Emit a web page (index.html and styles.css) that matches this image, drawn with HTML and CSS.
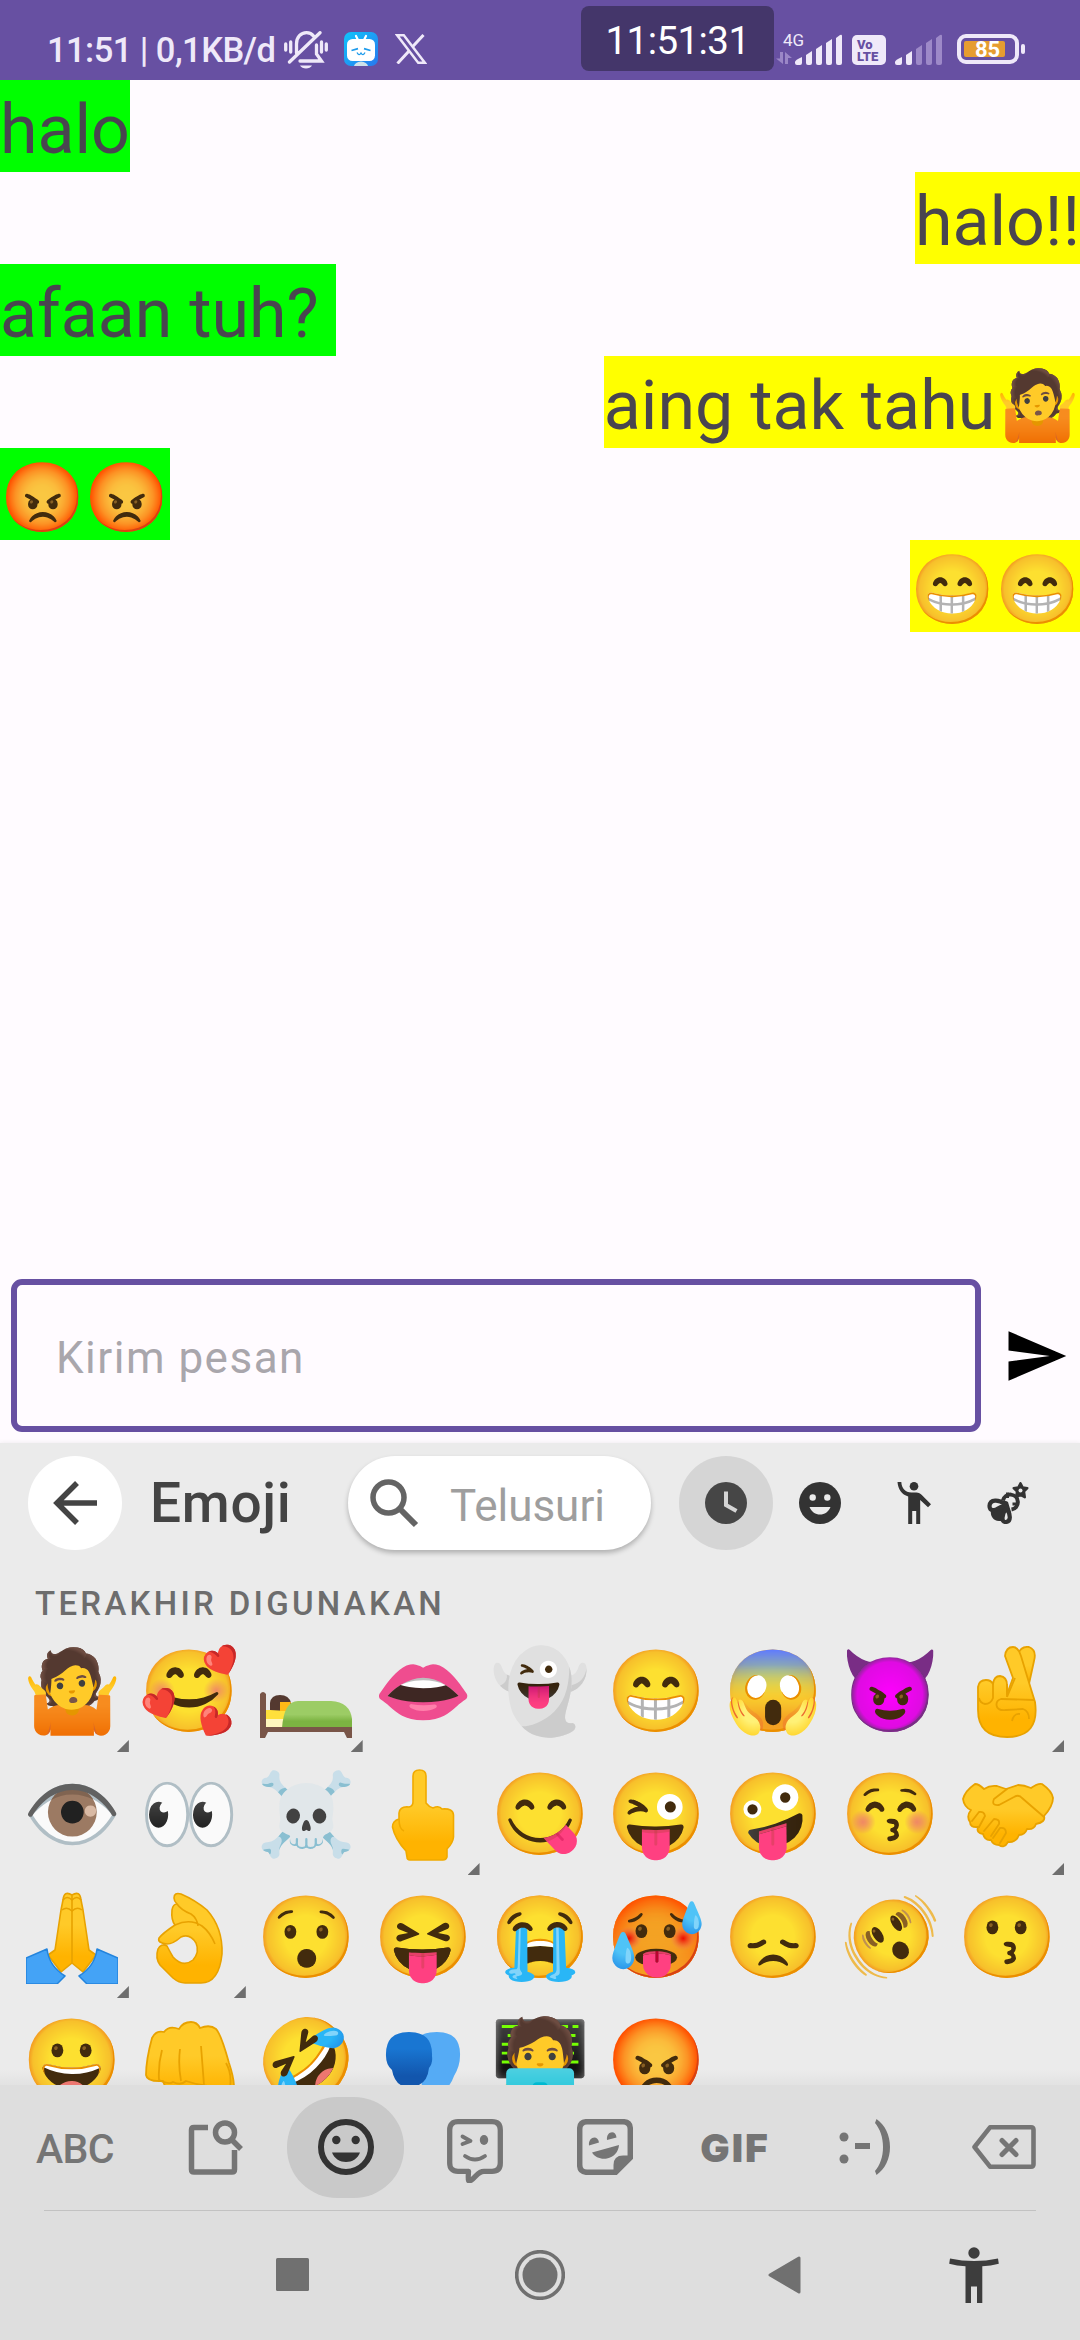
FILE: index.html
```html
<!DOCTYPE html>
<html lang="id">
<head>
<meta charset="utf-8">
<title>Chat</title>
<link rel="stylesheet" href="styles.css">
</head>
<body>
<div class="phone">
  <header class="status">
    <div class="status-left">
      <span class="status-time">11:51 | 0,1KB/d</span>
      <svg class="ic-bell" viewBox="0 0 44 38" width="44" height="38" fill="none" stroke="#efe9f9" stroke-width="3.300" stroke-linecap="round">
        <path d="M12.500 22V13C12.500 6 17 1.700 22.500 1.700c3 0 5.500 1.200 7 3.200M32.500 14v9l5 7H16M36 1.700L5.500 31M1.700 13v6M6.700 11v10M37.500 11v10M42.300 13v6"/>
        <path d="M16 34.500h12c-2 4-10 4-12 0z" fill="#efe9f9" stroke="none"/>
      </svg>
      <svg class="ic-tv" viewBox="0 0 34 34" width="34" height="34">
        <defs><linearGradient id="tv" x1="0" y1="0" x2="1" y2="1"><stop offset="0" stop-color="#10c4fb"/><stop offset="1" stop-color="#2878ee"/></linearGradient></defs>
        <rect width="34" height="34" rx="7" fill="url(#tv)"/>
        <path d="M12 4l2 4M22 4l-2 4" stroke="#fff" stroke-width="2.200" stroke-linecap="round"/>
        <rect x="3" y="7" width="28" height="22" rx="5.500" fill="#fff"/>
        <path d="M10 34q1-4 7-4.500q6 .5 7 4.500z" fill="#cfe2ea"/>
        <path d="M7.500 18.500l6.500-1.800M26.500 18.500L20 16.700" stroke="#1d9bec" stroke-width="1.800"/>
        <path d="M13 20.500q2 4 4 .5q2 3.500 4-.5" stroke="#1d9bec" stroke-width="1.300" fill="none"/>
      </svg>
      <svg class="ic-x" viewBox="0 0 32 30" width="32" height="30" fill="none" stroke="#efe9f9">
        <path d="M2.200 1.300h6.600L29.800 28.700h-6.600z" stroke-width="2.400"/>
        <path d="M28.500 1L17.300 13M14 17L2.500 29.500" stroke-width="3"/>
      </svg>
    </div>
    <div class="clock">11:51:31</div>
    <div class="status-right">
      <div class="net">
        <span class="net-4g">4G</span>
        <svg class="ic-updown" viewBox="0 0 16 12" width="16" height="12" fill="#9b87c7"><path d="M4 0h3v12L0 6.500h4zM9 12h3V6h4L9 0z"/></svg>
      </div>
      <svg class="ic-sig" viewBox="0 0 48 31" width="48" height="31" fill="#efe9f9"><path d="M0 28q0-2 7-5v6q0 2-2 2H2q-2 0-2-2zM11 21l6-4v12q0 2-2 2h-2q-2 0-2-2zM21 15l6-4v18q0 2-2 2h-2q-2 0-2-2zM31 9l6-4v24q0 2-2 2h-2q-2 0-2-2zM41 4l4-3q2-1 2 1v27q0 2-2 2h-2q-2 0-2-2z"/></svg>
      <div class="volte"><span>Vo</span><span>LTE</span></div>
      <svg class="ic-sig" viewBox="0 0 48 31" width="48" height="31" fill="#efe9f9"><path d="M0 28q0-2 7-5v6q0 2-2 2H2q-2 0-2-2zM11 21l6-4v12q0 2-2 2h-2q-2 0-2-2z"/><path fill="#9d89c8" d="M21 15l6-4v18q0 2-2 2h-2q-2 0-2-2zM31 9l6-4v24q0 2-2 2h-2q-2 0-2-2zM41 4l4-3q2-1 2 1v27q0 2-2 2h-2q-2 0-2-2z"/></svg>
      <div class="battery"><div class="battery-body"><div class="battery-fill">85</div></div><i></i></div>
    </div>
  </header>

  <main class="chat">
    <p class="msg in">halo</p>
    <p class="msg out">halo!!</p>
    <p class="msg in">afaan tuh? </p>
    <p class="msg out">aing tak tahu🤷</p>
    <p class="msg in">😡😡</p>
    <p class="msg out">😁😁</p>
  </main>

  <form class="compose">
    <div class="field">Kirim pesan</div>
    <svg class="send" viewBox="0 0 24 24" width="66" height="66"><path d="M2.010 21L23 12 2.010 3 2 10l15 2-15 2z"/></svg>
  </form>

  <section class="keyboard">
    <div class="kb-head">
      <div class="round back"><svg viewBox="0 0 44 44" width="44" height="44" fill="none" stroke="#444" stroke-width="5.500"><path d="M44 22H4M24 2L4 22l20 20"/></svg></div>
      <h1>Emoji</h1>
      <div class="search">
        <svg viewBox="0 0 49 49" width="49" height="49" fill="none" stroke="#646464"><circle cx="18.500" cy="18.500" r="15.500" stroke-width="5.500"/><path d="M29 29L46 46" stroke-width="6"/></svg>
        <span>Telusuri</span>
      </div>
      <div class="cats">
        <div class="round on"><svg viewBox="0 0 42 42" width="42" height="42"><circle cx="21" cy="21" r="21" fill="#464646"/><path d="M21 9.500V23l10.500 6" fill="none" stroke="#d5d5d5" stroke-width="4"/></svg></div>
        <div class="round"><svg viewBox="0 0 42 42" width="42" height="42"><circle cx="21" cy="21" r="21" fill="#333"/><g fill="#ebebeb"><circle cx="13.700" cy="15.500" r="3.200"/><circle cx="28.300" cy="15.500" r="3.200"/><path d="M10.500 25h21c-2 5-6 7.500-10.500 7.500S12.500 30 10.500 25z"/></g></svg></div>
        <div class="round"><svg viewBox="0 0 42 42" width="42" height="42" fill="#333"><circle cx="21" cy="4.300" r="4.300"/><path d="M4.500 0H8.300c.3 6 4 10.500 10 10.500h5c2.500 0 4 1 5.500 2.500l9.200 9.300-3 2.900L27.200 18v24h-4V29h-4v13h-4V14.500C8.800 12.500 5 7 4.500 0z"/></svg></div>
        <div class="round"><svg viewBox="0 0 42 42" width="42" height="42" fill="none" stroke="#333">
          <path fill="#333" stroke="none" d="M4 28c3-8 11-12 17-8l3 10c0 6-5 10-12 9-6-.5-9-5-8-11z"/>
          <path d="M16 18.500a7.500 7.500 0 1 1 8.500 9" stroke-width="4"/><path d="M20.500 16V10.500M25.500 22H31" stroke-width="3"/>
          <path d="M17.500 22C12 17.500 3 17 2.500 24c0 5 5 5 8.500 2.500 3-2 6-2.500 8-1z" fill="#ebebeb" stroke-width="4.200"/>
          <path d="M18.500 27c-3.500 6-4.500 13 0 13 6 0 5-7.500 1.500-13z" fill="#ebebeb" stroke-width="4.200"/>
          <path fill="#333" stroke="#333" stroke-width="2.400" stroke-linejoin="round" d="M33.500 1.200l2.100 4.200 4.700.7-3.300 3.400.8 5.700-4.300-2.200-4.300 2.200.8-5.700-3.300-3.400 4.700-.7z"/><circle cx="33.500" cy="8.500" r="2" fill="#ebebeb" stroke="none"/>
        </svg></div>
      </div>
    </div>
    <h2>TERAKHIR DIGUNAKAN</h2>
    <div class="grid">
      <span class="more">🤷</span><span>🥰</span>
      <span class="more"><svg viewBox="0 0 92 92" width="92" height="92">
        <defs>
          <linearGradient id="blanket" x1="0" y1="0" x2="0" y2="1"><stop offset=".5" stop-color="#9ccc65"/><stop offset=".75" stop-color="#7cb342"/></linearGradient>
          <linearGradient id="skin" x1="0" y1="0" x2="0" y2="1"><stop offset=".4" stop-color="#ffca28"/><stop offset=".8" stop-color="#ffb300"/></linearGradient>
          <linearGradient id="head" x1="0" y1="0" x2="0" y2="1"><stop offset=".3" stop-color="#1976d2"/><stop offset=".8" stop-color="#1256ad"/></linearGradient>
        </defs>
        <path d="M6 64h22v10H6z" fill="#ffe03b"/><path d="M6 73h20v9H6z" fill="#fff6bd"/>
        <path d="M10 64V57q1-8 10-8t11 8l-3 8z" fill="#543930"/><path d="M20 56h11l-3 9h-8z" fill="#ffb916"/>
        <path d="M22 82q2-27 16-27h33q19 1 21 18v9z" fill="url(#blanket)"/>
        <path d="M0 48q3-4 6 0v33h86v11h-5l-3-6H8l-3 6H0z" fill="#795548"/>
      </svg></span>
      <span>👄</span><span>👻</span><span>😁</span><span>😱</span><span>😈</span>
      <span class="more"><svg viewBox="0 0 92 92" width="92" height="92" fill="url(#skin)" stroke="#e8a200" stroke-width="1.800" stroke-linejoin="round">
        <path d="M56 8q3-8 11-7 8 3 5 14l-7 32H48z"/>
        <path d="M43 10q1-9 8-9 5 0 8 9l6 20 8 26q5 35-28 35-29 0-29-27V41q1-7 8-7 5 0 7 4 1-8 7-8 7 1 7 9v9l6-16z"/>
        <path d="M31 38v14q-2 6-8 6-5-1-6-6M45 38v13M45 51l8-19M72 54l-33-1q-6 2-4 8 2 4 9 3l17-1q6 2 6 10M50 75q2-8 8-7" fill="none"/>
      </svg></span>
      <span>👁️</span><span>👀</span><span>☠️</span>
      <span class="more"><svg viewBox="0 0 92 92" width="92" height="92" fill="url(#skin)" stroke="#f0aa00" stroke-width="1.600" stroke-linejoin="round">
        <path d="M36 7q0-6 6.500-6T49 7v27q3 4 7 5 6-3 9 1 11-1 11.500 6v22q-.5 6-6.500 12v8q-1 3-4 3H33q-3 0-3-3l-1-6Q18 70 15.500 58q0-6 6.500-8v-6q1-7 10-6 4-1 4-5z"/><path d="M22 50q0 10 5 12" fill="none"/>
      </svg></span>
      <span>😋</span><span>😜</span><span>🤪</span><span>😚</span>
      <span class="more"><svg viewBox="0 0 92 92" width="92" height="92" fill="url(#skin)" stroke="#e8a200" stroke-width="1.800" stroke-linejoin="round" stroke-linecap="round">
        <path d="M1 30q2-8 12-15 4 0 9 5 6-4 13-3l9 3 12-4q6 0 13 3 7-5 11-4 10 7 11 14 0 8-9 18 2 6-8 8-2 6-9 5-2 6-8 6-3 8-11 7-4 7-9 3-6 0-8-5-6 1-8-6-7-1-5-7-8 1-8-5-4-6 1-12-7-3-8-11z"/>
        <path d="M45 20L32 30q-3 7 5 6l15-8q5-3 8 1l22 19M10 52l7-9q5-1 6 4l-6 11M22 62l10-12q6 0 5 5l-8 12M31 69l7-10q6-1 6 5l-6 10" fill="none"/>
      </svg></span>
      <span class="more"><svg viewBox="0 0 92 92" width="92" height="92" stroke-linejoin="round">
        <g fill="url(#skin)" stroke="#e8a200" stroke-width="1.600"><path d="M46 3q-8-5-9 5l-2 10-6 40-7 5 13 17 11-9zM46 3q8-5 9 5l2 10 6 40 7 5-13 17-11-9z"/><path d="M37 8q4-5 9 0 5-5 9 0M36 18q5-4 10 1 5-5 10-1" fill="none"/></g>
        <g fill="#44a3f6" stroke="#2384dd" stroke-width="1.500"><path d="M0 66l21-9q2 17 18 27l-8 8H0zM92 66l-21-9q-2 17-18 27l8 8h31z"/></g>
      </svg></span>
      <span class="more"><svg viewBox="0 0 92 92" width="92" height="92" fill="url(#skin)" stroke="#e8a200" stroke-width="1.600" stroke-linejoin="round">
        <path d="M31 6q0-6 7-4 14 6 26 16 16 18 15 44-3 29-21 29H42q-6 0-12-5L17 73q-5-7-2-16 3-6 9-3 2 4 6 11 10 11 20 3 7-8 3-17-6-10-15-6-8 7-14 7-10-1-8-6 4-5 16-13-4-5-3-15 1-6 5-6-3-3-3-6z"/><path d="M34 12q4 6 14 10 6 4 7 12M32 33q15-7 27 1 8 6 13 18" fill="none"/>
      </svg></span>
      <span>😯</span><span>😝</span><span>😭</span><span>🥵</span><span>😞</span><span>🫨</span><span>😗</span>
      <span>😀</span>
      <span><svg viewBox="0 0 92 92" width="92" height="92" fill="url(#skin)" stroke="#e8a200" stroke-width="1.800" stroke-linejoin="round">
        <path d="M3 60q0-15 6-37 4-8 12-6 5-7 15-3 4-7 12-7 6 0 9 6 10-4 16 1 5 5 13 34 5 15 5 24v20H30L20 66Q4 67 3 60z"/><path d="M19 35q-4 15-3 30 10 5 14 2 8 4 13-1 9 3 16 4 10 2 24 2M37 34q-2 16 1 32M58 31l3 39M83 48q6 10 4 24" fill="none"/>
      </svg></span>
      <span>🤣</span>
      <span><svg viewBox="0 0 92 92" width="92" height="92">
        <path d="M38 30q2-13 22-13 24 0 23 24 0 10-6 20-3 9-11 16H46z" fill="#55abf5"/>
        <path d="M9 41Q8 17 32 17t23 24q1 7-3 12-2 19-20 19-14 0-17-17-6-5-6-14z" fill="url(#head)"/>
      </svg></span>
      <span>🧑‍💻</span><span>😡</span>
    </div>
    <div class="tabs">
      <span class="abc">ABC</span>
      <div class="tab"><svg viewBox="0 0 56 56" width="56" height="56" fill="none" stroke="#757575" stroke-width="5.500"><path d="M20 8.500H6q-2.500 0-2.500 2.500v39.500q0 2.500 2.500 2.500h38q2.500 0 2.500-2.500V31"/><circle cx="37" cy="13.500" r="9.500"/><path d="M43.500 20.500L53 30"/></svg></div>
      <div class="tab sel"><svg viewBox="0 0 56 56" width="56" height="56"><circle cx="28" cy="28" r="25" fill="none" stroke="#333" stroke-width="6"/><g fill="#333"><circle cx="18.300" cy="21" r="4.200"/><circle cx="37.700" cy="21" r="4.200"/><path d="M14 33.500h28c-2.500 6.500-8 9.500-14 9.500s-11.500-3-14-9.500z"/></g></svg></div>
      <div class="tab low"><svg viewBox="0 0 56 64" width="56" height="64" fill="none" stroke="#757575" stroke-width="5.300" stroke-linejoin="round"><path d="M11 2.700h34q8.300 0 8.300 8.300v33q0 8.300-8.300 8.300H37q-4 0-8 4.500-6 6.500-7.500 4.500-.5-1 0-9H11q-8.300 0-8.300-8.300V11Q2.700 2.700 11 2.700z"/><path d="M15.500 17.500l8 4.500-8 3M18 37q10 7 20 0" stroke-width="3.800" stroke-linecap="round"/><ellipse cx="37" cy="21" rx="4.200" ry="5" fill="#757575" stroke="none"/></svg></div>
      <div class="tab"><svg viewBox="0 0 56 56" width="56" height="56" fill="none" stroke="#757575" stroke-width="5.500"><path d="M10 2.700h36q7.300 0 7.300 7.300v28.500L38.500 53.300H10q-7.300 0-7.300-7.300V10Q2.700 2.700 10 2.700z"/><path d="M36.500 55V46q0-9.500 9.500-9.500h9.500V40L39.500 56z" fill="#757575" stroke="none"/><g fill="#757575" stroke="none"><path d="M15 33.500L42 26c-.5 7-5 12-12 13.500-6 1-12-1-15-6zM12 26.500c-1-9 9-11 10-3zM30 21c-1-9 9-10.500 9.500-2.500z"/></g></svg></div>
      <div class="tab gif">GIF</div>
      <div class="tab kao"><svg viewBox="0 0 52 56" width="52" height="56" fill="#757575"><circle cx="5" cy="18" r="4.500"/><circle cx="5" cy="40" r="4.500"/><path d="M16 24h15v6H16zM36 4l1.500-4C46 6 51 16 51 28s-5 22-13.500 28L36 52c5-6 8-14 8-24S41 10 36 4z"/></svg></div>
      <div class="tab bks"><svg viewBox="0 0 64 44" width="64" height="44" fill="none" stroke="#757575" stroke-width="4.600" stroke-linejoin="round"><path d="M18 2.300h41q2.500 0 2.500 2.500v34.400q0 2.500-2.500 2.500H18L2.500 22z"/><path d="M30 15.500L44 29.500M44 15.500L30 29.500" stroke-width="5" stroke-linecap="round"/></svg></div>
    </div>
    <nav class="nav">
      <svg viewBox="0 0 33 33" width="33" height="33" fill="#707070"><rect width="33" height="33" rx="1.500"/></svg>
      <svg viewBox="0 0 50 50" width="50" height="50"><circle cx="25" cy="25" r="23.300" fill="none" stroke="#707070" stroke-width="3.600"/><circle cx="25" cy="25" r="17.500" fill="#707070"/></svg>
      <svg viewBox="0 0 33 38" width="33" height="38" fill="#707070" stroke="#707070" stroke-width="3" stroke-linejoin="round"><path d="M31 2v34L2 19z"/></svg>
      <svg viewBox="0 0 50 56" width="50" height="56" fill="#3d3d3d"><circle cx="25" cy="6" r="5.700"/><path d="M1 11.500q24 5 48 0l.8 5.200q-8 2-16.500 2.600V56H28V39.500h-6V56h-5.500V19.300Q8 18.700.2 16.700z"/></svg>
    </nav>
  </section>
</div>
</body>
</html>
```
FILE: styles.css
```css
* { box-sizing: border-box; }
body { margin: 0; background: #fffbff; font-family: Roboto, "Noto Sans", "Noto Color Emoji", sans-serif; }
svg { display: block; flex: none; }
.phone { width: 1080px; height: 2340px; overflow: hidden; display: flex; flex-direction: column; }

.status { height: 80px; background: #6750a2; color: #efe9f9; display: flex; flex: none; }
.status-left { display: flex; align-items: flex-start; width: 581px; padding: 31px 0 0 47px; }
.status-time { width: 237px; font-size: 34.500px; font-weight: 500; letter-spacing: -.550px; line-height: 40px; margin-top: -1px; white-space: nowrap; }
.ic-tv { margin: 1px 0 0 16px; }
.ic-x { margin: 3px 0 0 17px; }
.clock { width: 193px; height: 65px; margin-top: 6px; border-radius: 8px; background: #44366a; color: #fff; font-size: 38.500px; letter-spacing: -.550px; line-height: 69px; text-align: center; }
.status-right { display: flex; align-items: flex-start; padding: 34px 0 0 2px; }
.net { width: 19px; height: 31px; display: flex; flex-direction: column; justify-content: space-between; margin-top: -4px; }
.net-4g { font-size: 17px; line-height: 20px; margin-left: 7px; }
.ic-updown { margin-bottom: -3px; }
.volte { width: 34px; height: 30px; margin: 1px 9px 0; border-radius: 5px; background: #efe9f9; color: #6750a2; font-weight: 900; font-size: 13px; line-height: 12px; padding: 4px 0 0 5px; display: flex; flex-direction: column; }
.battery { display: flex; align-items: center; gap: 2px; margin-left: 14px; }
.battery-body { width: 62px; height: 30px; border: 4px solid #efe9f9; border-radius: 9px; padding: 3px; }
.battery-fill { width: 41px; height: 16px; background: #e69d30; border-radius: 2px; color: #fff; font-weight: 700; font-size: 22px; line-height: 18px; padding-left: 11px; }
.battery i { width: 4px; height: 10px; border-radius: 2px; background: #efe9f9; }

.chat { flex: 1; display: flex; flex-direction: column; color: #49454f; }
.msg { margin: 0; height: 92px; font-size: 68.100px; line-height: 100px; white-space: pre; overflow: hidden; }
.in { align-self: flex-start; background: #0f0; }
.out { align-self: flex-end; background: #ff0; }

.compose { height: 153px; margin: 0 11px 11px; display: flex; align-items: center; flex: none; }
.field { width: 970px; height: 153px; border: 6px solid #6750a2; border-radius: 11px; padding-left: 39px; font-size: 44px; line-height: 147px; letter-spacing: 1.500px; color: #a9a6ac; }
.send { margin-left: 22px; }

.keyboard { height: 897px; flex: none; background: #ebebeb; display: flex; flex-direction: column; box-shadow: 0 0 5px rgba(0,0,0,.08); }
.kb-head { display: flex; padding: 13px 0 0 28px; height: 115px; flex: none; }
.round { width: 94px; height: 94px; border-radius: 50%; display: flex; align-items: center; justify-content: center; }
.back { background: #fff; }
.round.on { background: #d5d5d5; }
h1 { margin: 0 0 0 28px; width: 198px; font-size: 55px; font-weight: 500; letter-spacing: .700px; line-height: 94px; color: #444; }
.search { width: 303px; height: 94px; border-radius: 47px; background: #fff; box-shadow: 0 3px 5px rgba(0,0,0,.25); display: flex; align-items: center; padding-left: 22px; font-size: 44px; color: #9e9e9e; }
.search span { margin: 5px 0 0 31px; }
.cats { display: flex; margin-left: 28px; }
h2 { margin: 0; padding: 26px 0 0 35px; height: 72px; flex: none; font-size: 33px; font-weight: 500; line-height: 40px; letter-spacing: 3.300px; color: #6d6d6d; }
.grid { height: 455px; flex: none; overflow: hidden; padding: 0 14px; display: grid; grid-template-columns: repeat(9, 116.900px); grid-auto-rows: 123px; background: linear-gradient(#ebebeb 440px, #e2e2e2); }
.grid > span { position: relative; display: flex; align-items: center; justify-content: center; font-size: 80.500px; line-height: 123px; white-space: nowrap; }
.more::after { content: ""; position: absolute; right: 2px; bottom: 1px; width: 12px; height: 12px; background: #6e6e6e; clip-path: polygon(100% 0, 100% 100%, 0 100%); }
.tabs { height: 126px; flex: none; background: #dedede; display: flex; align-items: center; padding: 0 0 2px 36px; position: relative; }
.tabs::after { content: ""; position: absolute; left: 44px; right: 44px; bottom: 0; height: 1px; background: #c2c2c2; }
.abc { width: 121px; flex: none; font-size: 41px; font-weight: 500; letter-spacing: -.600px; color: #757575; padding-top: 3px; }
.tab { width: 117px; height: 101px; flex: none; display: flex; align-items: center; justify-content: center; }
.tab:nth-child(2) { width: 130px; padding-right: 13px; }
.sel { background: #c9c9c9; border-radius: 50px; }
.tab.low { padding-top: 8px; width: 142px; }
.low + .tab { width: 118px; }
.tab.gif { font: 900 39px Inter, sans-serif; letter-spacing: 2px; color: #757575; width: 142px; }
.tab.bks { width: 113px; justify-content: flex-end; }
.nav { flex: 1; background: #dedede; display: flex; align-items: center; padding: 0 0 2px 276px; }
.nav svg:nth-child(2) { margin-left: 206px; }
.nav svg:nth-child(3) { margin-left: 203px; }
.nav svg:nth-child(4) { margin-left: 148px; }
```
